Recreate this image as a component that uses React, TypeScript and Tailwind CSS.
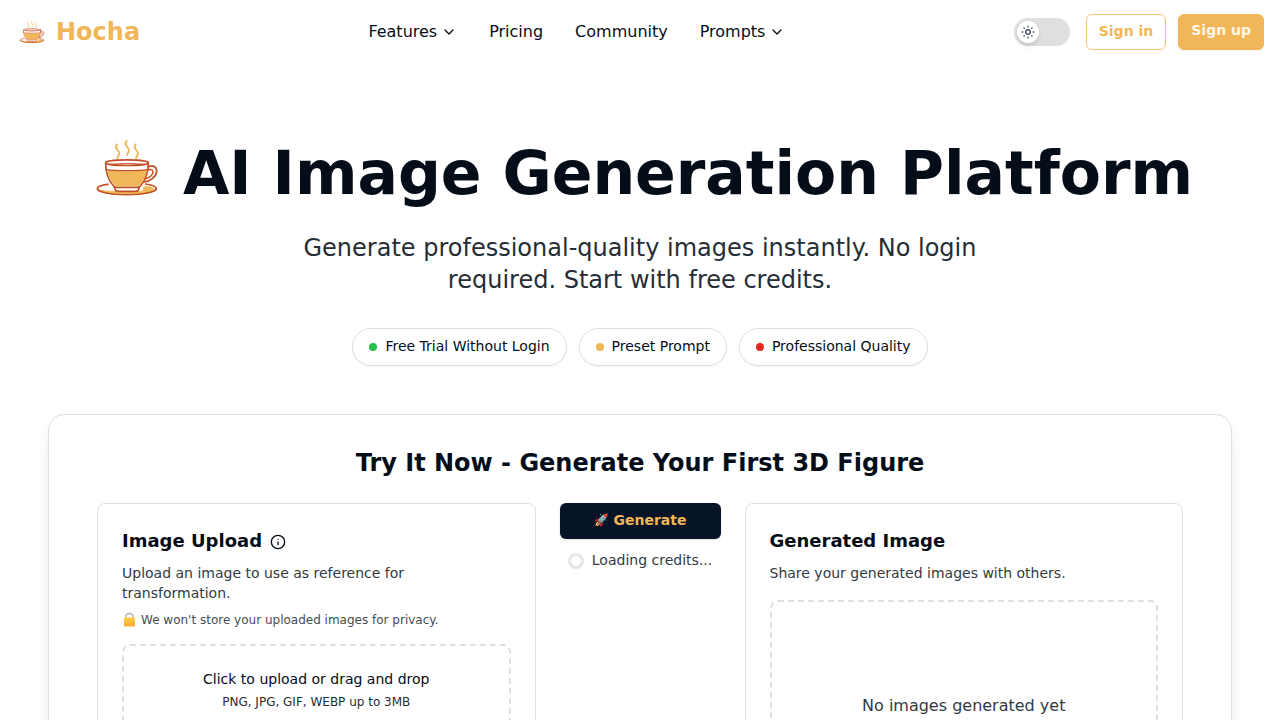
import { ChevronDown, Info } from "lucide-react";

function CupLogo({ className }: { className: string }) {
  return (
    <svg viewBox="-9 -8 240 240" className={className} fill="none" strokeLinecap="round" strokeLinejoin="round" aria-hidden="true">
      <g stroke="#f1b657" strokeWidth="5.5">
        <path d="M81 41c-5 5-5 9 0 15 6 7 10 11 4 20-1 2-2 4-3 6" />
        <path d="M110 31c-5 5-5 10 0 16 6 7 10 12 4 20l-3 6" />
        <path d="M137 41c-5 5-5 9 0 15 6 7 10 11 4 20-1 2-2 4-3 6" />
      </g>
      <path d="M54 161c-19 2-32 7-32 13 0 9 38 17 88 17s89-8 89-17c0-6-12-11-32-14" fill="#fff" stroke="#c24f22" strokeWidth="5" />
      <path d="M27 177c12 4 32 5 46 5h74c16 0 36-1 46-5-12 9-42 13-83 13s-72-5-83-13z" fill="#f1b657" stroke="#f1b657" strokeWidth="2" />
      <path d="M160 168c8-2 18-2 26 1 5 2 7 5 4 8-8 4-20 5-33 5z" fill="#f1b657" />
      <path d="M22 174c0 9 38 18 88 18s89-9 89-18" stroke="#c24f22" strokeWidth="4" />
      <path d="M72 166l4 12c1 3 4 4 8 4h53c4 0 7-1 8-4l4-12" fill="#fff" stroke="#c24f22" strokeWidth="5" />
      <path d="M47 96c0 31 8 53 24 70 2 3 5 4 9 4h61c4 0 7-1 10-4 15-17 24-39 24-70" fill="#fff" stroke="#c24f22" strokeWidth="5" />
      <path d="M52 119c16 4 103 4 119 0-3 19-11 34-23 45-2 2-4 3-7 3H82c-3 0-5-1-7-3-13-13-20-26-23-45z" fill="#f1b657" />
      <g stroke="#c24f22">
        <path d="M50 117c20 4 103 4 122 0" strokeWidth="4" />
        <ellipse cx="111" cy="96" rx="64" ry="8.5" fill="#fff" strokeWidth="5" />
        <path d="M64 101c28-3 66-3 94 0" strokeWidth="3" />
        <path d="M174 108c15-6 26 0 26 13 0 15-17 31-38 33" strokeWidth="5" />
        <path d="M172 118c10-4 17-1 17 6 0 8-10 17-22 20" strokeWidth="4.5" />
      </g>
    </svg>
  );
}

function SunIcon() {
  return (
    <svg viewBox="0 0 16 16" className="size-4" fill="none" stroke="#4b5563" strokeWidth="1.5" strokeLinecap="round" aria-hidden="true">
      <circle cx="8" cy="8" r="2.3" />
      <path d="M8 2.3v.4M8 13.3v.4M2.3 8h.4M13.3 8h.4M4 4l.3.3M11.7 11.7l.3.3M4 12l.3-.3M11.7 4.3l.3-.3" />
    </svg>
  );
}

function LockIcon() {
  return (
    <svg viewBox="0 0 15 16" className="h-4 w-[15px]" fill="none" aria-hidden="true">
      <defs>
        <linearGradient id="lock-body" x1="0" y1="0" x2="0" y2="1">
          <stop offset="0" stopColor="#ffcf45" />
          <stop offset="1" stopColor="#fda931" />
        </linearGradient>
      </defs>
      <path d="M3.9 8V4.8a3.6 3.3 0 0 1 7.2 0V8" stroke="#c0c0c0" strokeWidth="1.8" />
      <rect x="2" y="5.6" width="11" height="9" rx="1" fill="url(#lock-body)" />
    </svg>
  );
}

const navItems = [
  { label: "Features", menu: true },
  { label: "Pricing", menu: false },
  { label: "Community", menu: false },
  { label: "Prompts", menu: true },
];

function Header() {
  return (
    <header className="flex h-16 items-center justify-between px-4">
      <a href="#" className="flex items-center gap-2 text-2xl font-bold text-[#f1b657]">
        <CupLogo className="size-8" />
        Hocha
      </a>
      <nav className="flex items-center gap-8">
        {navItems.map((item) =>
          item.menu ? (
            <button key={item.label} type="button" className="flex items-center gap-1">
              {item.label}
              <ChevronDown className="size-4" />
            </button>
          ) : (
            <a key={item.label} href="#">
              {item.label}
            </a>
          ),
        )}
      </nav>
      <div className="flex items-center">
        <button type="button" role="switch" aria-checked="false" aria-label="Dark mode" className="mr-4 flex h-7 w-14 items-center rounded-full bg-[#dfdfdf] px-[3px]">
          <span className="flex size-[22px] items-center justify-center rounded-full bg-white shadow-md">
            <SunIcon />
          </span>
        </button>
        <button type="button" className="mr-3 h-9 rounded-md border border-[#f3c373] px-3 pb-0.5 text-sm font-bold text-[#f1b657]">
          Sign in
        </button>
        <button type="button" className="h-9 rounded-md border border-[#f1b657] bg-[#f1b657] px-3 pb-1 text-sm font-bold text-[#fdf6e8] shadow-xs">
          Sign up
        </button>
      </div>
    </header>
  );
}

function Pill({ dot, children }: { dot: string; children: string }) {
  return (
    <li className="flex items-center gap-2 rounded-full border border-[#dfdfdf] px-4 py-2 text-sm shadow-xs">
      <span className={`size-2 rounded-full ${dot}`} />
      <span className="pb-0.5 leading-[18px]">{children}</span>
    </li>
  );
}

function Hero() {
  return (
    <section className="flex flex-col items-center px-12 pt-16 text-center">
      <h1 className="flex items-end gap-4 text-6xl leading-[68px] font-bold whitespace-nowrap">
        <CupLogo className="size-20" />
        <span className="pb-px">AI Image Generation Platform</span>
      </h1>
      <p className="mt-6 max-w-3xl px-10 text-2xl text-[#272d35]">
        Generate professional-quality images instantly. No login required. Start with free credits.
      </p>
      <ul className="mt-8 flex gap-3">
        <Pill dot="bg-[#23c04d]">Free Trial Without Login</Pill>
        <Pill dot="bg-[#f1b657]">Preset Prompt</Pill>
        <Pill dot="bg-[#e8261c]">Professional Quality</Pill>
      </ul>
    </section>
  );
}

function TryItNow() {
  return (
    <section className="mx-12 mt-12 rounded-2xl border border-[#dfdfdf] bg-white px-12 py-8 shadow-lg">
      <h2 className="text-center text-2xl font-bold">Try It Now - Generate Your First 3D Figure</h2>
      <div className="mt-6 grid grid-cols-[1fr_auto_1fr] gap-6">
        <div className="rounded-lg border border-[#dfdfdf] p-6">
          <h3 className="flex items-center gap-2 text-lg leading-7 font-bold">
            <span className="pb-0.5 leading-[26px]">Image Upload</span>
            <Info className="size-4" />
          </h3>
          <p className="mt-[7px] pb-px text-sm text-[#323a44]">Upload an image to use as reference for transformation.</p>
          <p className="mt-2 flex items-center gap-1 text-xs text-[#454c56]">
            <LockIcon />
            We won't store your uploaded images for privacy.
          </p>
          <label className="mt-4 block cursor-pointer rounded-lg border-2 border-dashed border-[#dfdfdf] px-6 pt-[23px] pb-12 text-center">
            <input type="file" className="sr-only" />
            <span className="block pb-px text-sm">Click to upload or drag and drop</span>
            <span className="mt-1 block text-xs text-[#272d35]">PNG, JPG, GIF, WEBP up to 3MB</span>
          </label>
        </div>
        <div className="w-[161px]">
          <button type="button" className="flex h-9 w-full items-center justify-center gap-[5px] rounded-md bg-[#071427] pb-0.5 text-sm font-bold text-[#f1b657] shadow-sm">
            <span className="text-xs">🚀</span>
            Generate
          </button>
          <div className="mt-3 flex items-center justify-center gap-2 text-sm text-[#323a44]">
            <span className="size-4 rounded-full border-[3px] border-[#e6e6e6]" />
            <span className="pb-0.5 leading-[18px]">Loading credits...</span>
          </div>
        </div>
        <div className="rounded-lg border border-[#dfdfdf] p-6">
          <h3 className="pb-0.5 text-lg leading-[26px] font-bold">Generated Image</h3>
          <p className="mt-[7px] pb-px text-sm text-[#323a44]">Share your generated images with others.</p>
          <div className="mt-4 rounded-lg border-2 border-dashed border-[#dfdfdf] py-[92px] text-center text-[#323a44]">
            No images generated yet
          </div>
        </div>
      </div>
    </section>
  );
}

export default function App() {
  return (
    <div className="h-screen overflow-x-hidden overflow-y-auto bg-white font-['DejaVu_Sans',sans-serif] text-[#050d18] [scrollbar-width:none]">
      <Header />
      <main>
        <Hero />
        <TryItNow />
      </main>
    </div>
  );
}
